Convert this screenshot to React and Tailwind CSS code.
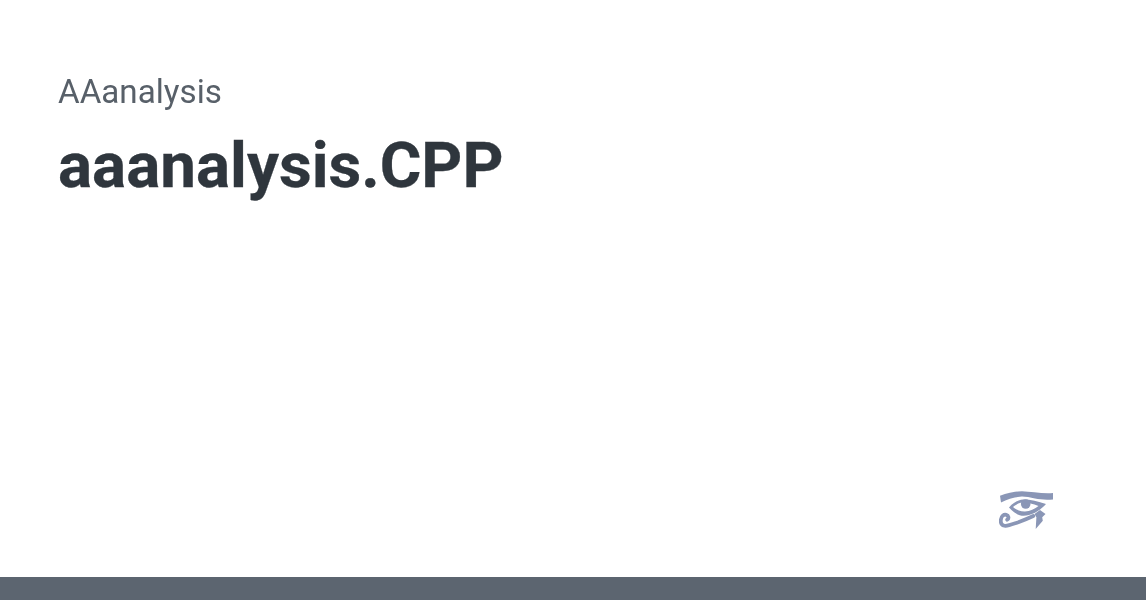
export default function App() {
  return (
    <div className="flex h-[600px] flex-col bg-white font-['Roboto',sans-serif]">
      <div className="flex flex-1 flex-col px-[58px] pt-[71px]">
        <p className="text-[33.2px] leading-[41px] font-normal text-[#586069] blur-[0.3px]">AAanalysis</p>
        <h1 className="mt-[14px] text-[63.7px] leading-[80px] font-bold text-[#2f363d] blur-[0.3px] [-webkit-text-stroke:0.3px_#2f363d]">aaanalysis.CPP</h1>
        <div className="mt-auto mb-[47px] flex justify-end pr-[34px]">
          <svg width="55" height="40" viewBox="0 0 55 40" fill="none" className="blur-[0.4px]">
            <path d="M1 5.7 C8 3 16 1.2 23 1.2 C32 1.5 44 4 54 3 L54 9.5 C47 10 41 9.6 36 8.6 C31 7.5 26 6.5 22.7 6.6 C15 7 8 9.4 2 12.5 Z" fill="#8a96b6" />
            <path fillRule="evenodd" d="M10 17.5 C14 12.5 20 9.8 24 9.5 C31 9.4 39 11.3 47 14 C44 17.5 40 20.5 36 22.8 C31 25.3 26 26.2 22.7 25.7 C18 25 13.5 21.5 10 17.5 Z M14 17 C17 19.8 21.5 21.8 26 21.6 C31 21.1 36 18.8 39.5 15.9 C34 14 29 12.6 24 12.3 C20.5 12.6 16.8 14.4 14 17 Z" fill="#8a96b6" />
            <circle cx="26.7" cy="14" r="4.8" fill="#8a96b6" />
            <path d="M34.3 26 C29 28.5 24 30.5 19.3 32.2 C15 33.6 10 35.6 6.5 35.9 C3 36.1 1.3 33 1.9 29.5 C2.3 26 4.8 24.2 7.2 24.8 C9.7 25.5 10.2 28.5 8.2 29.7" stroke="#8a96b6" strokeWidth="3.8" strokeLinecap="round" />
            <path d="M41 20 L46.5 24 L43.2 27.3 L43.8 30.7 L36.7 39 L37.4 27.3 L35.5 24 Z" fill="#8a96b6" />
          </svg>
        </div>
      </div>
      <div className="h-[23px] bg-[#5c6570]" />
    </div>
  );
}
